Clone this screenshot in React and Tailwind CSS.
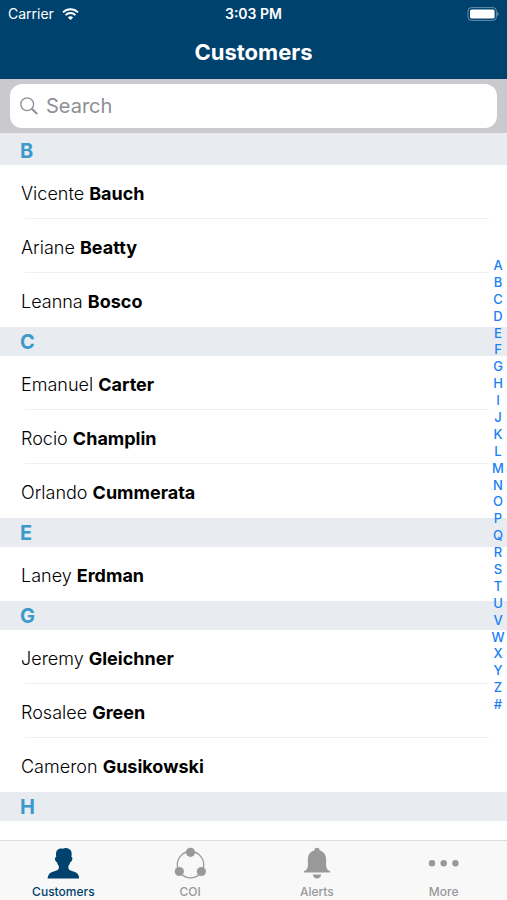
import { useState } from 'react';
import { clsx } from 'clsx';

const sections = [
    {
        letter: 'B',
        customers: [
            { first: 'Vicente', last: 'Bauch' },
            { first: 'Ariane', last: 'Beatty' },
            { first: 'Leanna', last: 'Bosco' },
        ],
    },
    {
        letter: 'C',
        customers: [
            { first: 'Emanuel', last: 'Carter' },
            { first: 'Rocio', last: 'Champlin' },
            { first: 'Orlando', last: 'Cummerata' },
        ],
    },
    {
        letter: 'E',
        customers: [{ first: 'Laney', last: 'Erdman' }],
    },
    {
        letter: 'G',
        customers: [
            { first: 'Jeremy', last: 'Gleichner' },
            { first: 'Rosalee', last: 'Green' },
            { first: 'Cameron', last: 'Gusikowski' },
        ],
    },
    {
        letter: 'H',
        customers: [],
    },
];

const indexLetters = 'ABCDEFGHIJKLMNOPQRSTUVWXYZ#'.split('');

const WifiIcon = () => (
    <svg className="h-3 w-[17px]" viewBox="0 0 17 12" fill="none" stroke="currentColor" strokeWidth="2" aria-hidden="true">
        <path d="M1 4.4C5.2.2 11.8.2 16 4.4" />
        <path d="M3.6 7.1c2.7-2.7 7.1-2.7 9.8 0" />
        <path d="M8.5 12 5.9 9.4c1.5-1.4 3.7-1.4 5.2 0z" fill="currentColor" stroke="none" />
    </svg>
);

const BatteryIcon = () => (
    <svg className="h-[14px] w-8" viewBox="0 0 32 14" fill="none" aria-hidden="true">
        <rect x="1" y=".6" width="28.4" height="12.8" rx="3.4" stroke="#fff" strokeOpacity=".4" />
        <rect x="3" y="2.4" width="24.6" height="9.2" rx="1.6" fill="#fff" />
        <path d="M30.4 5c1.6.5 1.6 3.5 0 4z" fill="#fff" fillOpacity=".5" />
    </svg>
);

const SearchIcon = () => (
    <svg className="h-[18px] w-[18px] shrink-0" viewBox="0 0 18 18" fill="none" stroke="#8e8e93" aria-hidden="true">
        <circle cx="7.2" cy="7.2" r="6.4" strokeWidth="1.3" />
        <path d="m11.8 11.8 5.4 5.2" strokeWidth="2" />
    </svg>
);

const CustomersIcon = () => (
    <svg className="h-8 w-8" viewBox="0 0 32 32" fill="currentColor" aria-hidden="true">
        <path d="M9.2 10C8.7 6 9 2.8 12 1.900c1.300-.8 2.700-.4 3.800-.1 2-1.100 4.700-1 6.200.3 2.600.7 3 4 2.400 7.900 1.500.2 1.200 3-.1 4.600-.4.400-.8.500-1 .5-.4 1.900-1.100 3-1.900 3.900v2.600c.6 1.500 2.200 2.100 4.300 2.700 3.800 1.100 6.300 2.800 6.700 7.200H.6c.4-4.400 2.900-6.100 6.700-7.200 2.100-.6 3.900-1.200 4.500-2.700V19c-.8-.9-1.500-2-1.900-3.900-.2 0-.6-.1-1-.5-1.300-1.600-1.400-4.500.3-4.600z" />
    </svg>
);

const CoiIcon = () => (
    <svg className="h-8 w-8" viewBox="0 0 32 32" fill="currentColor" aria-hidden="true">
        <circle cx="16.5" cy="17.7" r="13.2" fill="none" stroke="currentColor" strokeWidth="1.3" />
        <circle cx="16.5" cy="5.3" r="4.6" />
        <circle cx="5.3" cy="24.5" r="4.6" />
        <circle cx="27.4" cy="24.5" r="4.6" />
    </svg>
);

const AlertsIcon = () => (
    <svg className="h-8 w-8" viewBox="0 0 32 32" fill="currentColor" aria-hidden="true">
        <path d="M16 .8c-1.6 0-2.8 1.2-2.7 2.7C8.9 4.7 6.900 8.200 6.900 12.500v4.700c0 3.900-.9 5.700-4 7.100v1.300h26.200v-1.300c-3.100-1.400-4-3.200-4-7.100v-4.700c0-4.300-2-7.800-6.400-9C18.800 2 17.600.8 16 .8z" />
        <path d="M11.800 27.500h8.400c-.6 5.400-7.800 5.400-8.400 0z" />
    </svg>
);

const MoreIcon = () => (
    <svg className="h-8 w-8" viewBox="0 0 32 32" fill="currentColor" aria-hidden="true">
        <circle cx="4" cy="16.3" r="3.2" />
        <circle cx="15.7" cy="16.3" r="3.2" />
        <circle cx="27.4" cy="16.3" r="3.2" />
    </svg>
);

const tabs = [
    { name: 'Customers', icon: CustomersIcon },
    { name: 'COI', icon: CoiIcon },
    { name: 'Alerts', icon: AlertsIcon },
    { name: 'More', icon: MoreIcon },
];

const Header = () => (
    <header className="shrink-0 bg-[#00426e] text-white">
        <div className="grid h-7 grid-cols-3 items-center px-2 text-sm">
            <div className="flex items-center gap-2">
                <span>Carrier</span>
                <WifiIcon />
            </div>
            <span className="text-center font-semibold">3:03 PM</span>
            <div className="flex justify-end">
                <BatteryIcon />
            </div>
        </div>
        <h1 className="h-[51px] pt-2 text-center text-[22px] leading-8 font-bold">Customers</h1>
    </header>
);

const SearchBar = ({ value, onChange }) => (
    <div className="shrink-0 bg-[#c9c9ce] px-[10px] py-[5px]">
        <label className="flex h-11 items-center gap-2 rounded-xl bg-white px-[10px]">
            <SearchIcon />
            <input
                type="text"
                aria-label="Search"
                placeholder="Search"
                value={value}
                onChange={(e) => onChange(e.target.value)}
                className="min-w-0 flex-1 bg-transparent text-xl text-black outline-none placeholder:text-[#8e8e93]"
            />
        </label>
    </div>
);

const Section = ({ letter, customers }) => (
    <section id={letter}>
        <h2 className="flex h-[29px] items-center bg-[#e8ecf0] px-5 text-xl font-bold text-[#3b9acb]">{letter}</h2>
        <ul className="divide-y divide-[#f0f0f1] pr-[18px] pl-[25px]">
            {customers.map((customer) => (
                <li key={customer.last} className="flex h-[54px] items-center pt-1 text-lg font-light text-black">
                    <span className="-ml-1">
                        {customer.first} <b className="font-bold">{customer.last}</b>
                    </span>
                </li>
            ))}
        </ul>
    </section>
);

const App = () => {
    const [query, setQuery] = useState('');
    const [active, setActive] = useState('Customers');

    const visible = sections
        .map((section) => ({
            ...section,
            customers: section.customers.filter((c) =>
                `${c.first} ${c.last}`.toLowerCase().includes(query.toLowerCase())
            ),
        }))
        .filter((section) => !query || section.customers.length > 0);

    return (
        <div className="flex h-screen flex-col bg-white font-['Inter',sans-serif]">
            <Header />
            <SearchBar value={query} onChange={setQuery} />

            <div className="relative min-h-0 flex-1">
                <main className="h-full overflow-hidden border-t-[3px] border-[#e8ecf0]">
                    {visible.map((section) => (
                        <Section key={section.letter} {...section} />
                    ))}
                </main>

                {/* Alphabet index over the right edge of the list */}
                <nav aria-label="Index" className="absolute inset-y-0 right-0 flex w-[18px] flex-col justify-center pb-1">
                    <div className="flex h-[456px] flex-col">
                        {indexLetters.map((letter) => (
                            <a
                                key={letter}
                                href={`#${letter}`}
                                className="flex flex-1 items-center justify-center text-[13px] leading-4 font-medium text-[#1a80f5]"
                            >
                                {letter}
                            </a>
                        ))}
                    </div>
                </nav>
            </div>

            <nav className="grid h-[60px] shrink-0 grid-cols-4 border-t border-[#dcdcde] bg-[#f8f8f8]">
                {tabs.map((tab) => (
                    <button
                        key={tab.name}
                        type="button"
                        onClick={() => setActive(tab.name)}
                        className={clsx(
                            'flex flex-col items-center gap-[5px] pt-[6px] text-xs font-medium',
                            active === tab.name ? 'text-[#00426e]' : 'text-[#999999]'
                        )}
                    >
                        <tab.icon />
                        {tab.name}
                    </button>
                ))}
            </nav>
        </div>
    );
};

export default App;
